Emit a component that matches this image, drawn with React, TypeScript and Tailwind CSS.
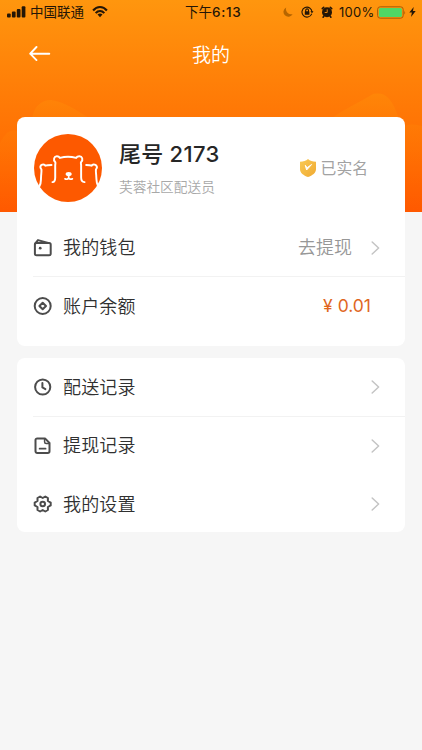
import type { ReactNode } from 'react';

const stroke = {
  fill: 'none',
  stroke: 'currentColor',
  strokeLinecap: 'round' as const,
  strokeLinejoin: 'round' as const,
};

function Icon({ children }: { children: ReactNode }) {
  return (
    <svg viewBox="0 0 20 20" className="h-5 w-5 shrink-0 text-[#4c4c4c]" {...stroke} strokeWidth={2}>
      {children}
    </svg>
  );
}

const WalletIcon = () => (
  <Icon>
    <rect x="1.9" y="5" width="15.8" height="12.3" rx="1.6" />
    <path d="M2.3 5.4 5 2.1 15.2 5" />
    <circle cx="7.2" cy="10.2" r="1.4" fill="currentColor" stroke="none" />
  </Icon>
);

const CoinIcon = () => (
  <Icon>
    <circle cx="9.7" cy="10" r="8" />
    <path d="m9.7 6.7 3.3 3.3-3.3 3.3L6.4 10z" />
  </Icon>
);

const ClockIcon = () => (
  <Icon>
    <circle cx="9.7" cy="10" r="7.6" />
    <path d="M9.4 6v4.4l3 1.7" />
  </Icon>
);

const DocumentIcon = () => (
  <Icon>
    <path d="M12 2.4H4.2a1.7 1.7 0 0 0-1.7 1.7v11.2a1.700 1.700 0 0 0 1.700 1.700h10.600a1.700 1.700 0 0 0 1.700-1.700V7z" />
    <path d="M11.6 3v3a1.5 1.5 0 0 0 1.5 1.5h3" strokeWidth={1.5} />
    <path d="M6.600 12.700h6" strokeWidth={1.700} />
  </Icon>
);

const GearIcon = () => (
  <Icon>
    <path d="M7.1 2.5 9.7 4l2.6-1.5 2.6 1.5v3l2.8 1.6v2.8L14.9 13v3l-2.6 1.5L9.7 16l-2.6 1.5L4.5 16v-3l-2.8-1.6V8.6L4.5 7V4z" />
    <circle cx="9.7" cy="10" r="2.3" />
  </Icon>
);

const Chevron = () => (
  <svg viewBox="0 0 9 14" className="h-3.5 w-[9px] shrink-0 text-[#c4c4c4]" {...stroke} strokeWidth={1.5}>
    <path d="m1.2 1 6.4 6-6.4 6" />
  </svg>
);

function BearLogo() {
  return (
    <svg viewBox="42 27 202 202" className="h-[68px] w-[68px] shrink-0 text-white" {...stroke} strokeWidth={5.8}>
      <circle cx="143" cy="128" r="101" fill="#fd5900" stroke="none" />
      <path d="M97 170c7-1 8-6 8-14V120c0-4 2-6 0-10-7-6-3-17 5-17 5 0 7 2 9 5 14-4 34-4 48 0 2-3 5-5 10-5 8 0 12 11 5 17-2 4 0 6 0 10v36c0 8 3 13 10 14" />
      <path d="M94 119c-7 0-13 0-18 2-4-7-16-3-15 5 0 3 2 4 3 6 1 9-1 14-1 22-1 12 1 18-5 28" />
      <path d="M197 119c7 0 12 0 16 2 4-7 16-3 16 5 0 3-2 4-3 6-1 9 1 14 1 22 1 12 0 18 5 27" />
      <ellipse cx="145" cy="146" rx="9" ry="6" fill="currentColor" stroke="none" />
      <path d="M145 149v7m-11 4c4 3 9 1 11-3 2 4 7 6 11 3" strokeWidth={5} />
    </svg>
  );
}

function StatusBar() {
  return (
    <div className="flex h-6 items-center pl-[7px] pr-[5px] text-[#241606]">
      <svg viewBox="0 0 19 12" className="h-3 w-[19px]" fill="currentColor">
        <rect x="0" y="7.5" width="3.7" height="4" rx="1" />
        <rect x="4.9" y="5.5" width="3.7" height="6" rx="1" />
        <rect x="9.8" y="3" width="3.7" height="8.5" rx="1" />
        <rect x="14.7" y="0.3" width="3.7" height="11.2" rx="1" />
      </svg>
      <span className="ml-[4px] w-[54px] whitespace-nowrap text-[13.5px] leading-6">中国联通</span>
      <svg viewBox="0 0 16 12" className="ml-[8px] h-3 w-4" {...stroke} strokeLinecap="butt" strokeWidth={2.1}>
        <path d="M1.1 4.5C5-.1 11-.1 14.900 4.500" />
        <path d="M3.700 7.100c2.500-2.800 6.100-2.800 8.600 0" />
        <path d="m8 11.300-2.500-2.700q2.500-2 5 0z" fill="currentColor" stroke="none" />
      </svg>
      <span className="ml-[77px] w-[57px] whitespace-nowrap text-[13.5px] leading-6">
        下午<span className="text-[13.5px] font-medium tracking-[0.7px]">6:13</span>
      </span>
      <svg viewBox="0 0 10 10" className="ml-[41px] h-2.5 w-2.5 text-[#b66500]" fill="currentColor">
        <path d="M3.200.4A4.900 4.900 0 1 0 9.700 7.100 5.300 5.300 0 0 1 3.200.4z" />
      </svg>
      <svg viewBox="0 0 13 12" className="ml-[8px] h-3 w-[13px]" {...stroke} strokeWidth={1.1}>
        <path d="M10.600 8.100A5 5 0 1 1 11 6" />
        <path d="m9.300 5.200 1.700 1.800 1.500-1.800z" fill="currentColor" stroke="none" />
        <rect x="3.800" y="5.300" width="4.600" height="3.500" rx=".4" fill="currentColor" stroke="none" />
        <path d="M4.700 5.500V4.300a1.400 1.400 0 0 1 2.800 0v1.200" />
      </svg>
      <svg viewBox="0 0 12 12" className="ml-[7px] h-3 w-3" {...stroke}>
        <circle cx="6" cy="6.300" r="5" fill="currentColor" stroke="none" />
        <path d="M1.300 2.600 2.700 1.300M10.700 2.600 9.300 1.300M2.800 10.300l-.7.900M9.200 10.300l.7.900" strokeWidth={1.600} />
        <path d="M6.200 3.800v2.700H4.100" stroke="#ff900b" strokeWidth={0.9} />
      </svg>
      <span className="ml-[6px] w-[36px] whitespace-nowrap text-[13px] leading-6 tracking-[0.3px]">100%</span>
      <svg viewBox="0 0 29 13" className="ml-[2px] h-[13px] w-[29px]">
        <rect x=".6" y=".8" width="25.600" height="11.400" rx="2.600" fill="none" stroke="#a95c08" strokeWidth="1" />
        <rect x="1.900" y="2.100" width="23" height="8.800" rx="1.500" fill="#50d765" />
        <path d="M27.300 4.500q1.500 2 0 4z" fill="#a95c08" />
      </svg>
      <svg viewBox="0 0 7 10" className="ml-[3px] h-2.5 w-[7px]" fill="currentColor">
        <path d="M4.700 0 .3 5.600h2.600L2 10l4.700-5.900H4z" />
      </svg>
    </div>
  );
}

function Row({ icon, label, children, divided }: { icon: ReactNode; label: string; children: ReactNode; divided?: boolean }) {
  return (
    <div className="flex flex-col pl-4">
      <div className="flex h-[58.5px] items-center pr-[25px]">
        {icon}
        <span className="ml-[10px] flex-1 pt-px text-[18px] font-[350] leading-6 tracking-[0.15px] text-[#303030]">{label}</span>
        {children}
      </div>
      {divided && <div className="-mt-px h-px bg-[#f2f2f2]" />}
    </div>
  );
}

export default function App() {
  return (
    <div className="relative h-[750px] w-[422px] overflow-hidden bg-[#f6f6f6] bg-[linear-gradient(180deg,#ff960e_0%,#ff8008_38%,#ff6e03_70%,#ff5800_100%)] bg-[length:100%_212px] bg-no-repeat font-[Inter,'Noto_Sans_CJK_SC',sans-serif]">
      <svg viewBox="0 0 422 212" className="absolute left-0 top-0 h-[212px] w-[422px]">
        <defs>
          <linearGradient id="hill" x1="0" y1="92" x2="0" y2="212" gradientUnits="userSpaceOnUse">
            <stop offset="0" stopColor="#ff8a08" stopOpacity=".7" />
            <stop offset="1" stopColor="#ff6200" stopOpacity=".1" />
          </linearGradient>
        </defs>
        <path d="M32 120c1-13 9-20 19-20 14 2 25 10 38 18v20H32zM0 143c5-10 10-14 17-12v81H0z" fill="url(#hill)" />
        <path d="M332 118c14-10 26-15 41-24 15-3 20 8 27 27v10h-68zM405 126c7-3 12-1 17 0v86h-17z" fill="url(#hill)" />
      </svg>

      <div className="relative flex flex-col">
        <StatusBar />
        <header className="grid h-[93px] grid-cols-[60px_1fr_60px] pt-[17px]">
          <svg viewBox="0 0 22 16" className="ml-[29px] mt-[5px] h-4 w-[22px] text-white" {...stroke} strokeWidth={1.900}>
            <path d="M20.300 7.700H1.200M7.500 1 1.200 7.700l6.300 6.400" />
          </svg>
          <h1 className="pt-px text-center text-[19px] font-[350] leading-7 text-white">我的</h1>
        </header>

        <main className="flex flex-col gap-3 pl-[17px] pr-[17px]">
          <section className="h-[229px] rounded-lg bg-white">
            <div className="flex h-[101.5px] items-center pl-[17px] pr-[37px]">
              <BearLogo />
              <div className="ml-[17px] flex flex-1 flex-col">
                <span className="whitespace-nowrap text-[22px] font-medium leading-8 tracking-[0.2px] text-[#262626]">
                  尾号 <span className="font-[450] tracking-[0.4px]">2173</span>
                </span>
                <span className="mt-[7px] whitespace-nowrap text-[13.7px] font-[350] leading-5 text-[#a8a8a8]">芙蓉社区配送员</span>
              </div>
              <svg viewBox="0 0 16 18" className="h-[18px] w-4">
                <defs>
                  <linearGradient id="shield" x1="0" y1="0" x2="1" y2="1">
                    <stop offset="0" stopColor="#f9ca55" />
                    <stop offset="1" stopColor="#f0aa32" />
                  </linearGradient>
                </defs>
                <path d="M8 0c2 1.800 4.500 2.500 8 2.800v7.400c0 3.600-3.500 6.300-8 7.800-4.500-1.500-8-4.200-8-7.800V2.800C3.500 2.500 6 1.800 8 0z" fill="url(#shield)" />
                <path d="m5.300 6.300 1.300 4.700 5-5.500-4.500 3.200z" fill="#fff" stroke="#fff" strokeWidth="1" strokeLinejoin="round" />
              </svg>
              <span className="ml-[5px] whitespace-nowrap pt-[2px] text-[15.800px] leading-6 text-[#a2a2a2]">已实名</span>
            </div>
            <Row icon={<WalletIcon />} label="我的钱包" divided>
              <span className="mr-[19px] pt-px text-[18px] font-[350] leading-6 text-[#979797]">去提现</span>
              <Chevron />
            </Row>
            <Row icon={<CoinIcon />} label="账户余额">
              <span className="mr-[9px] text-[17.500px] leading-6 text-[#e0661e]">¥ 0.01</span>
            </Row>
          </section>

          <section className="h-[174px] rounded-lg bg-white">
            <Row icon={<ClockIcon />} label="配送记录" divided>
              <Chevron />
            </Row>
            <Row icon={<DocumentIcon />} label="提现记录">
              <Chevron />
            </Row>
            <Row icon={<GearIcon />} label="我的设置">
              <Chevron />
            </Row>
          </section>
        </main>
      </div>
    </div>
  );
}
